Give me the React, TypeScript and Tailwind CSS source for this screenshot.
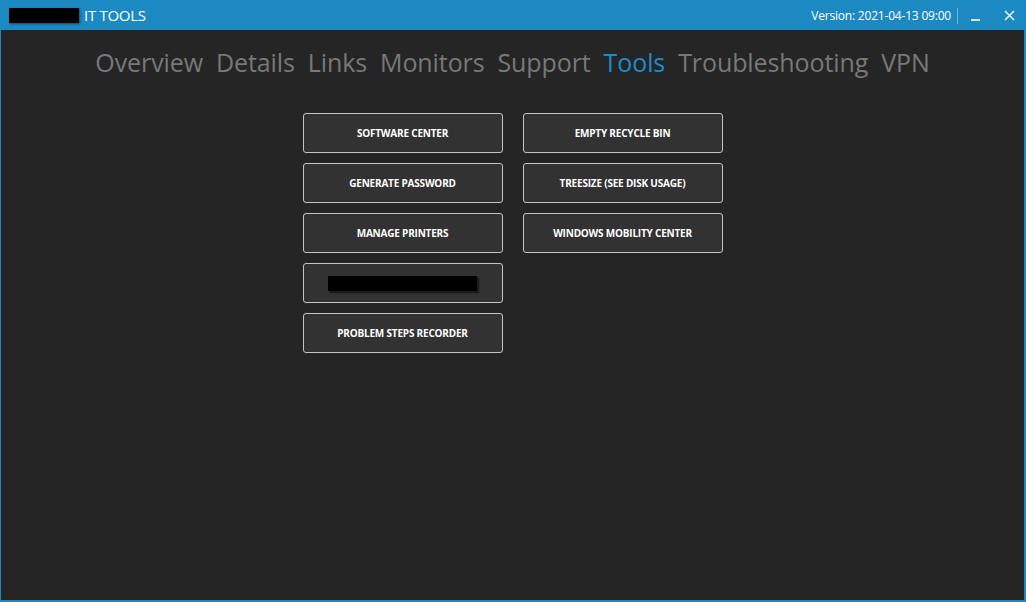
import React from "react";

const left = ["SOFTWARE CENTER", "GENERATE PASSWORD", "MANAGE PRINTERS", "__REDACTED__", "PROBLEM STEPS RECORDER"];
const right = ["EMPTY RECYCLE BIN", "TREESIZE (SEE DISK USAGE)", "WINDOWS MOBILITY CENTER"];
const nav = ["Overview", "Details", "Links", "Monitors", "Support", "Tools", "Troubleshooting", "VPN"];

function Btn({ label }: { label: string }) {
  return (
    <div className="w-[200px] h-[40px] rounded-[3px] border border-[#c4c4c4] bg-[#323232] flex items-center justify-center">
      {label === "__REDACTED__" ? (
        <div className="w-[149px] h-[15px] bg-black shadow-[2px_2px_1px_#1a1a1a]" />
      ) : (
        <span className="text-[10px] font-bold text-white tracking-[-0.2px]">{label}</span>
      )}
    </div>
  );
}

export default function App() {
  return (
    <div
      className="w-[1026px] h-[602px] border-l border-t border-r-2 border-b-2 border-[#1b8ac4] bg-[#252525] flex flex-col"
      style={{ fontFamily: '"Open Sans", "Noto Sans", sans-serif' }}
    >
      <div className="h-[29px] bg-[#1c89c2] flex items-center pl-[8px] pr-[9px] shrink-0">
        <div className="w-[70px] h-[15px] bg-black shadow-[1px_1px_2px_#0d4a6b]" />
        <span className="ml-[5px] text-[15px] text-white leading-none tracking-[-0.3px]">IT TOOLS</span>
        <div className="flex-1" />
        <span className="text-[12px] text-white tracking-[-0.2px]">Version: 2021-04-13 09:00</span>
        <div className="ml-[6px] w-px h-[16px] bg-[#6fb6dc]" />
        <div className="ml-[13px] w-[9px] h-[2px] bg-[#cfe6f3] mt-[8px]" />
        <svg className="ml-[24px]" width="11" height="11" viewBox="0 0 11 11">
          <path d="M1 1 L10 10 M10 1 L1 10" stroke="#e6f2f9" strokeWidth="1.6" />
        </svg>
      </div>
      <div className="flex justify-center gap-[13px] mt-[15px] text-[25px] leading-[34px] tracking-[-0.1px] text-[#787878]">
        {nav.map((n) => (
          <span key={n} className={n === "Tools" ? "text-[#1e8ccc]" : ""}>
            {n}
          </span>
        ))}
      </div>
      <div className="flex justify-center gap-[20px] mt-[34px]">
        <div className="flex flex-col gap-[10px]">
          {left.map((l) => (
            <Btn key={l} label={l} />
          ))}
        </div>
        <div className="flex flex-col gap-[10px]">
          {right.map((l) => (
            <Btn key={l} label={l} />
          ))}
        </div>
      </div>
    </div>
  );
}
